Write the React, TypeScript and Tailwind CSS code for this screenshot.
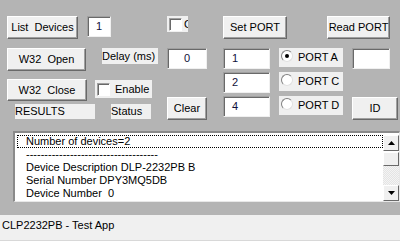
import React from "react";

const font = { fontFamily: '"Liberation Sans", Tahoma, Arial, sans-serif' };

const btnCls =
  "flex items-center justify-center bg-[#f0f0f0] border border-t-white border-l-white border-r-[#696969] border-b-[#696969] shadow-[inset_-1px_-1px_0_#a0a0a0] text-[11px] text-black whitespace-pre shrink-0";
const editCls =
  "flex items-center bg-white border border-t-[#a0a0a0] border-l-[#a0a0a0] border-r-[#f0f0f0] border-b-[#f0f0f0] shadow-[inset_1px_1px_0_#696969] text-[11px] text-[#10103a] shrink-0";
const labelCls = "flex items-center bg-[#f0f0f0] text-[11px] text-black whitespace-pre leading-none shrink-0";

function CheckBox() {
  return (
    <span className="inline-block shrink-0 w-[13px] h-[13px] bg-white border border-t-[#a0a0a0] border-l-[#a0a0a0] border-r-white border-b-white shadow-[inset_1px_1px_0_#696969]" />
  );
}

function Radio({ label, checked }: { label: string; checked?: boolean }) {
  return (
    <div className="flex items-center gap-[5px] bg-[#f0f0f0] text-[11px] text-black pl-[2px] w-[64px] h-[19px]">
      <span className="-mt-[4px] inline-flex items-center justify-center w-[12px] h-[12px] rounded-full bg-white border border-t-[#808080] border-l-[#808080] border-r-[#e0e0e0] border-b-[#e0e0e0]">
        {checked && <span className="w-[4px] h-[4px] rounded-full bg-black" />}
      </span>
      <span>{label}</span>
    </div>
  );
}

function ScrollBtn({ dir }: { dir: "up" | "down" }) {
  return (
    <div className="w-[16px] h-[16px] flex items-center justify-center bg-[#f0f0f0] border border-t-white border-l-white border-r-[#696969] border-b-[#696969]">
      <svg width="7" height="4" viewBox="0 0 7 4">
        {dir === "up" ? <polygon points="3.5,0 7,4 0,4" fill="#000" /> : <polygon points="0,0 7,0 3.5,4" fill="#000" />}
      </svg>
    </div>
  );
}

export default function App() {
  return (
    <div className="w-[400px] h-[241px] bg-[#b4b4b4] flex flex-col overflow-hidden" style={font}>
      {/* Controls area */}
      <div className="h-[131px] shrink-0 flex pt-[16px] pl-[7px]">
        {/* Column A */}
        <div className="w-[80px] flex flex-col items-start">
          <div className={`${btnCls} w-[71px] h-[23px]`}>List  Devices</div>
          <div className={`${btnCls} w-[79px] h-[23px] mt-[9px]`}>W32  Open</div>
          <div className={`${btnCls} w-[80px] h-[22px] mt-[8px]`}>W32  Close</div>
          <div className={`${labelCls} w-[80px] h-[15px] mt-[3px] ml-[8px]`}>RESULTS</div>
        </div>
        {/* Column B */}
        <div className="w-[71px] flex flex-col items-start">
          <div className={`${editCls} justify-center w-[24px] h-[21px]`}>1</div>
          <div className={`${labelCls} w-[56px] h-[16px] mt-[11px] ml-[15px]`}>Delay (ms)</div>
          <div className={`${labelCls} gap-[5px] pl-[2px] w-[57px] h-[18px] mt-[16px] ml-[8px]`}>
            <CheckBox />
            <span>Enable</span>
          </div>
          <div className={`${labelCls} w-[40px] h-[15px] mt-[6px] ml-[24px]`}>Status</div>
        </div>
        {/* Column C */}
        <div className="w-[40px] ml-[9px] flex flex-col items-start">
          <div className={`${labelCls} overflow-hidden pl-[2px] gap-[2px] w-[21px] h-[16px]`}>
            <CheckBox />
            <span>C</span>
          </div>
          <div className={`${editCls} justify-center w-[40px] h-[21px] mt-[16px]`}>0</div>
          <div className={`${btnCls} w-[40px] h-[23px] mt-[28px]`}>Clear</div>
        </div>
        {/* Right part */}
        <div className="ml-[16px] flex flex-col">
          <div className="flex gap-[40px]">
            <div className={`${btnCls} w-[64px] h-[23px]`}>Set PORT</div>
            <div className={`${btnCls} w-[63px] h-[23px]`}>Read PORT</div>
          </div>
          <div className="flex mt-[9px] gap-[9px]">
            <div className="flex flex-col gap-[3px]">
              <div className={`${editCls} justify-start pl-[8px] w-[47px] h-[21px]`}>1</div>
              <div className={`${editCls} justify-start pl-[8px] w-[47px] h-[21px]`}>2</div>
              <div className={`${editCls} justify-start pl-[8px] w-[47px] h-[21px]`}>4</div>
            </div>
            <div className="flex flex-col gap-[5px]">
              <Radio label="PORT A" checked />
              <Radio label="PORT C" />
              <Radio label="PORT D" />
            </div>
            <div className="flex flex-col">
              <div className={`${editCls} w-[38px] h-[21px]`} />
              <div className={`${btnCls} w-[46px] h-[23px] mt-[28px]`}>ID</div>
            </div>
          </div>
        </div>
      </div>

      {/* List box */}
      <div className="ml-[13px] h-[71px] shrink-0 flex bg-white border-t-2 border-l-2 border-t-[#8a8a8a] border-l-[#8a8a8a] border-b border-r border-b-[#e8e8e8] border-r-[#e8e8e8]">
        <div className="flex-1 pt-[2px] text-[11px] text-black leading-[13px]">
          <div className="ml-[2px] pl-[8px] border border-dotted border-black h-[13px] leading-[11px]">Number of devices=2</div>
          <div className="pl-[11px]">------------------------------------</div>
          <div className="pl-[11px]">Device Description DLP-2232PB B</div>
          <div className="pl-[11px]">Serial Number DPY3MQ5DB</div>
          <div className="pl-[11px] whitespace-pre">Device Number  0</div>
        </div>
        <div className="w-[16px] flex flex-col pt-[2px]">
          <ScrollBtn dir="up" />
          <div className="h-[14px] mt-[1px] bg-[#f0f0f0] border border-t-white border-l-white border-r-[#696969] border-b-[#696969]" />
          <div className="flex-1 bg-[repeating-conic-gradient(#f4f4f4_0_25%,#e4e4e4_0_50%)] bg-[length:2px_2px]" />
          <ScrollBtn dir="down" />
        </div>
      </div>

      {/* Status bar */}
      <div className="mt-[13px] flex-1 bg-[#f0f0f0] border-b border-b-[#d8d8d8] text-[11px] text-black pl-[2px] pt-[2px]">
        CLP2232PB - Test App
      </div>
    </div>
  );
}
